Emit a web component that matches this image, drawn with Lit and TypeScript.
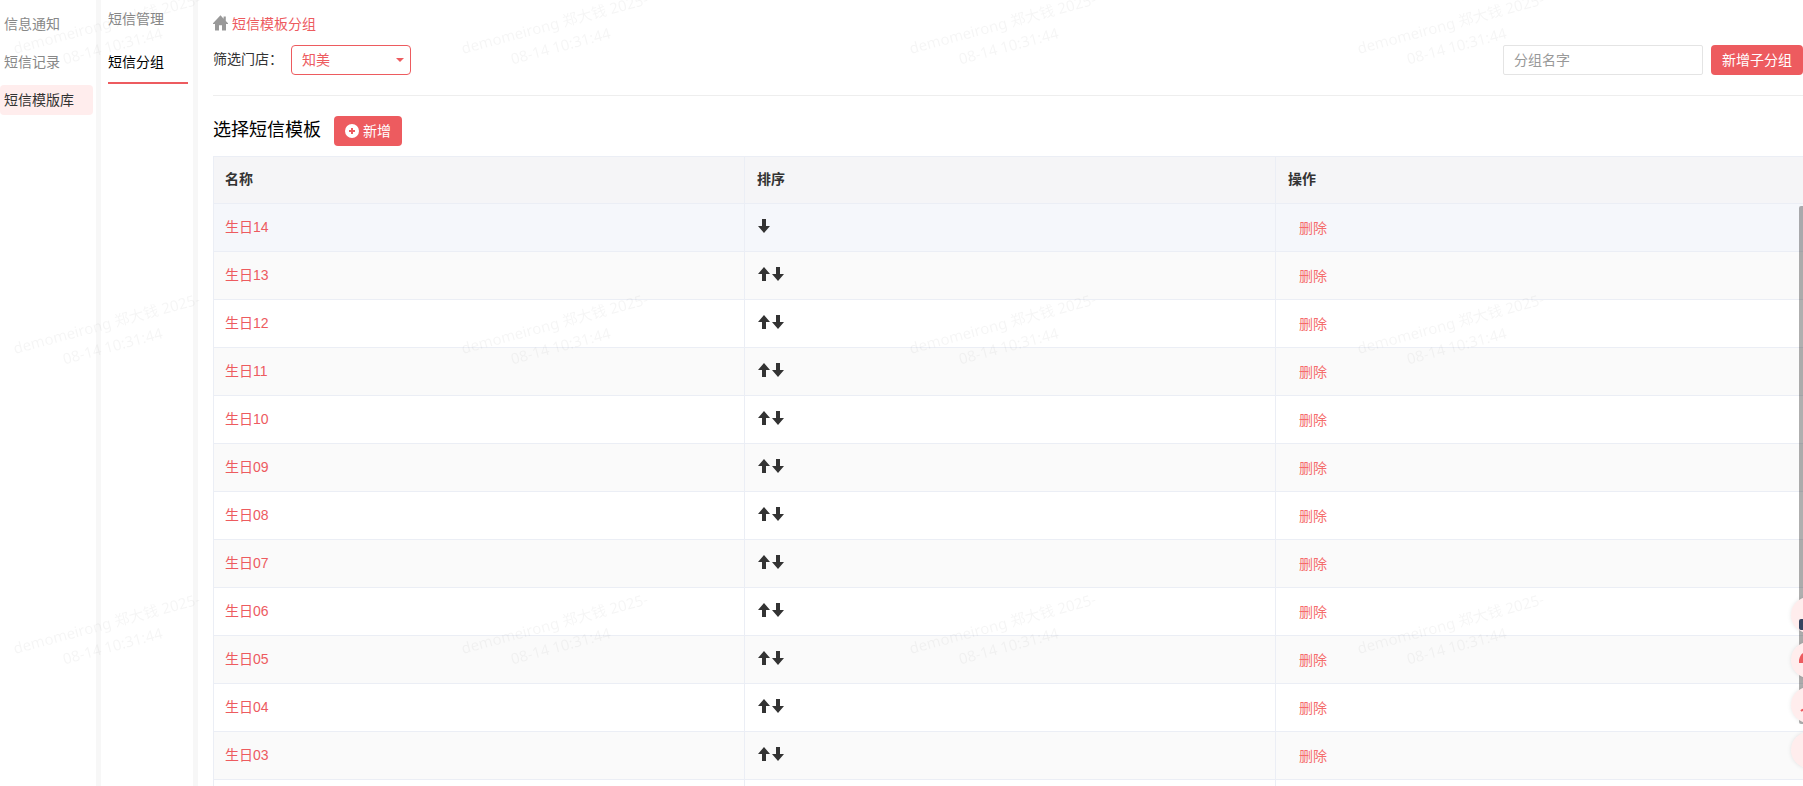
import { LitElement, html, svg, css } from "lit";
import { customElement, state } from "lit/decorators.js";
import { classMap } from "lit/directives/class-map.js";

const arrowUp = html`<svg class="glyph" viewBox="0 0 14 14" aria-hidden="true"><path d="M7 0 13 7H9V14H5V7H1Z" /></svg>`;
const arrowDown = html`<svg class="glyph" viewBox="0 0 14 14" aria-hidden="true"><path d="M7 14 1 7H5V0H9V7H13Z" /></svg>`;

@customElement("page-watermark")
class PageWatermark extends LitElement {
  static styles = css`
    :host {
      position: fixed;
      inset: 0;
      z-index: 5;
      pointer-events: none;
    }
    .sheet {
      display: block;
      width: 100%;
      height: 100%;
    }
    .mark {
      font: 15px "Noto Sans", "Noto Sans CJK SC", sans-serif;
      fill: #000;
      fill-opacity: 0.04;
      text-anchor: middle;
    }
  `;

  render() {
    const marks = [0, 1, 2].flatMap((row) =>
      [0, 1, 2, 3].map(
        (col) => svg`<g transform="translate(${108 + col * 448} ${29 + row * 300}) rotate(-15)">
          <text class="mark" x="0" y="0">demomeirong 郑大钱 2025-</text>
          <text class="mark" x="0" y="23">08-14 10:31:44</text>
        </g>`
      )
    );
    return html`<svg class="sheet" aria-hidden="true">${marks}</svg>`;
  }
}

@customElement("app-root")
class AppRoot extends LitElement {
  @state() private names = ["14", "13", "12", "11", "10", "09", "08", "07", "06", "05", "04", "03", "02"].map(
    (n) => "生日" + n
  );

  static styles = css`
    :host {
      display: block;
      height: 100vh;
      overflow: hidden;
      font: 14px/20px "Liberation Sans", "Noto Sans CJK SC", sans-serif;
      color: #333;
      background: #fff;
    }
    * {
      box-sizing: border-box;
    }
    a {
      text-decoration: none;
      color: inherit;
    }
    button,
    input,
    select {
      font: inherit;
      margin: 0;
    }
    button {
      cursor: pointer;
    }
    .layout {
      display: flex;
      height: 100%;
    }
    .side,
    .sub {
      flex: none;
      display: flex;
      flex-direction: column;
      border-right: 5px solid #f7f7f7;
      color: #888;
    }
    .side {
      width: 101px;
      gap: 8px;
      padding: 9px 3px 0 0;
    }
    .side-link {
      padding: 5px 4px;
      border-radius: 4px;
    }
    .side-link.on {
      background: #ffeded;
      color: #333;
    }
    .sub {
      width: 97px;
      gap: 2px;
      padding: 0 5px 0 7px;
    }
    .sub-link {
      padding: 9px 0 10px;
      border-bottom: 2px solid transparent;
    }
    .sub-link.on {
      color: #000;
      border-color: #ed5b5f;
    }
    .main {
      flex: 1;
      min-width: 0;
      padding: 14px 0 0 15px;
      overflow: hidden;
    }
    .crumb {
      display: flex;
      align-items: center;
      gap: 4px;
      color: #ed5b5f;
    }
    .home {
      display: block;
      width: 15px;
      height: 16px;
      margin-bottom: 2px;
      fill: #999;
    }
    .filters {
      display: flex;
      align-items: center;
      margin-top: 11px;
      padding-bottom: 20px;
      border-bottom: 1px solid #eee;
    }
    .label {
      padding-bottom: 2px;
    }
    .picker {
      position: relative;
      margin-left: 8px;
    }
    .store {
      display: block;
      width: 120px;
      height: 30px;
      padding: 0 24px 0 10px;
      appearance: none;
      border: 1px solid #ed5b5f;
      border-radius: 4px;
      background: #fff;
      color: #ed5b5f;
    }
    .caret {
      position: absolute;
      right: 7px;
      top: 13px;
      border: 4px solid transparent;
      border-top-color: #ed5b5f;
      border-bottom: 0;
      pointer-events: none;
    }
    .search {
      display: flex;
      gap: 8px;
      margin-left: auto;
    }
    .group {
      width: 200px;
      height: 30px;
      padding: 0 10px;
      border: 1px solid #e4e4e4;
      border-radius: 2px;
      background: #fff;
    }
    .group::placeholder {
      color: #999;
      opacity: 1;
    }
    .primary {
      display: flex;
      align-items: center;
      gap: 4px;
      height: 30px;
      padding: 0 11px;
      border: 0;
      border-radius: 4px;
      background: #ed5b5f;
      color: #fff;
    }
    .plus {
      width: 14px;
      height: 14px;
    }
    .heading {
      display: flex;
      align-items: center;
      gap: 13px;
      margin: 20px 0 10px;
    }
    .title {
      margin: 0;
      padding-bottom: 2px;
      font-size: 18px;
      line-height: 28px;
      font-weight: 400;
      color: #000;
    }
    .grid {
      width: calc(100% + 4px);
      table-layout: fixed;
      border-collapse: separate;
      border-spacing: 0;
      border: solid #ebeef5;
      border-width: 1px 0 0 1px;
    }
    .head,
    .cell {
      padding: 0 12px 2px;
      text-align: left;
      border: solid #ebeef5;
      border-width: 0 1px 1px 0;
    }
    .head:first-child,
    .cell:first-child {
      padding-left: 11px;
    }
    .head {
      height: 47px;
      background: #f5f5f7;
      font-weight: 700;
    }
    .cell {
      height: 48px;
    }
    .row:nth-child(even) {
      background: #fafafa;
    }
    .row.current {
      background: #f5f7fb;
    }
    .name {
      color: #ed5b5f;
    }
    .sort {
      display: flex;
      padding-bottom: 2px;
    }
    .move,
    .remove {
      padding: 0;
      border: 0;
      background: none;
    }
    .glyph {
      display: block;
      width: 14px;
      height: 14px;
      fill: #333;
    }
    .remove {
      display: block;
      padding: 2px 11px 0;
      color: #f56c6c;
    }
    .scroll {
      position: fixed;
      z-index: 2;
      right: 0;
      top: 206px;
      bottom: 62px;
      width: 4px;
      border-radius: 2px 0 0 2px;
      background: #00000050;
    }
    .float {
      position: fixed;
      z-index: 3;
      right: -24px;
      bottom: 18px;
      display: grid;
      gap: 9px;
    }
    .bubble {
      display: flex;
      align-items: center;
      width: 36px;
      height: 36px;
      padding: 0 8px;
      border: 0;
      border-radius: 50%;
      background: #ffeded;
      box-shadow: 0 0 4px #0000001a;
    }
    .mini {
      width: 20px;
      height: 36px;
    }
  `;

  private renderRow(name: string, i: number) {
    return html`<tr class=${classMap({ row: true, current: i === 0 })}>
      <td class="cell"><a class="name" href="#">${name}</a></td>
      <td class="cell">
        <div class="sort">
          ${i > 0 ? html`<button class="move" aria-label="上移">${arrowUp}</button>` : ""}
          <button class="move" aria-label="下移">${arrowDown}</button>
        </div>
      </td>
      <td class="cell"><button class="remove">删除</button></td>
    </tr>`;
  }

  render() {
    return html`
      <div class="layout">
        <nav class="side">
          <a class="side-link" href="#">信息通知</a>
          <a class="side-link" href="#">短信记录</a>
          <a class="side-link on" href="#">短信模版库</a>
        </nav>
        <nav class="sub">
          <a class="sub-link" href="#">短信管理</a>
          <a class="sub-link on" href="#">短信分组</a>
        </nav>
        <main class="main">
          <div class="crumb">
            <svg class="home" viewBox="0 0 15 15" preserveAspectRatio="none" aria-hidden="true">
              <path d="M7.5.3 10.6 3.4V1.4h2.2v4.2L15 7.8v.7h-2V14.5H9V9.5H6v5H2V8.5H0v-.7Z" />
            </svg>
            <a href="#">短信模板分组</a>
          </div>
          <div class="filters">
            <label class="label" for="store">筛选门店：</label>
            <div class="picker">
              <select class="store" id="store">
                <option>知美</option>
              </select>
              <span class="caret"></span>
            </div>
            <div class="search">
              <input class="group" type="text" placeholder="分组名字" aria-label="分组名字" />
              <button class="primary">新增子分组</button>
            </div>
          </div>
          <div class="heading">
            <h1 class="title">选择短信模板</h1>
            <button class="primary">
              <svg class="plus" viewBox="0 0 14 14" aria-hidden="true">
                <circle cx="7" cy="7" r="7" fill="#fff" />
                <path d="M6 4h2v2h2v2H8v2H6V8H4V6h2Z" fill="#ed5b5f" />
              </svg>
              新增
            </button>
          </div>
          <table class="grid">
            <thead>
              <tr>
                <th class="head" scope="col">名称</th>
                <th class="head" scope="col">排序</th>
                <th class="head" scope="col">操作</th>
              </tr>
            </thead>
            <tbody>
              ${this.names.map((n, i) => this.renderRow(n, i))}
            </tbody>
          </table>
        </main>
      </div>
      <div class="scroll"></div>
      <div class="float">
        <button class="bubble" aria-label="客服">
          <svg class="mini" viewBox="0 0 20 36" aria-hidden="true"><rect y="22" width="20" height="11" rx="2" fill="#34435f" /></svg>
        </button>
        <button class="bubble" aria-label="通知">
          <svg class="mini" viewBox="0 0 20 36" aria-hidden="true"><path d="M0 21v-3q1-5 4-7h12l4 6v4Z" fill="#ed5b5f" /></svg>
        </button>
        <button class="bubble" aria-label="账户">
          <svg class="mini" viewBox="0 0 20 36" aria-hidden="true"><path d="M2 24q2-2 8-2t8 2" fill="none" stroke="#ed5b5f" stroke-width="2" /></svg>
        </button>
        <button class="bubble" aria-label="更多"></button>
      </div>
      <page-watermark></page-watermark>
    `;
  }
}
